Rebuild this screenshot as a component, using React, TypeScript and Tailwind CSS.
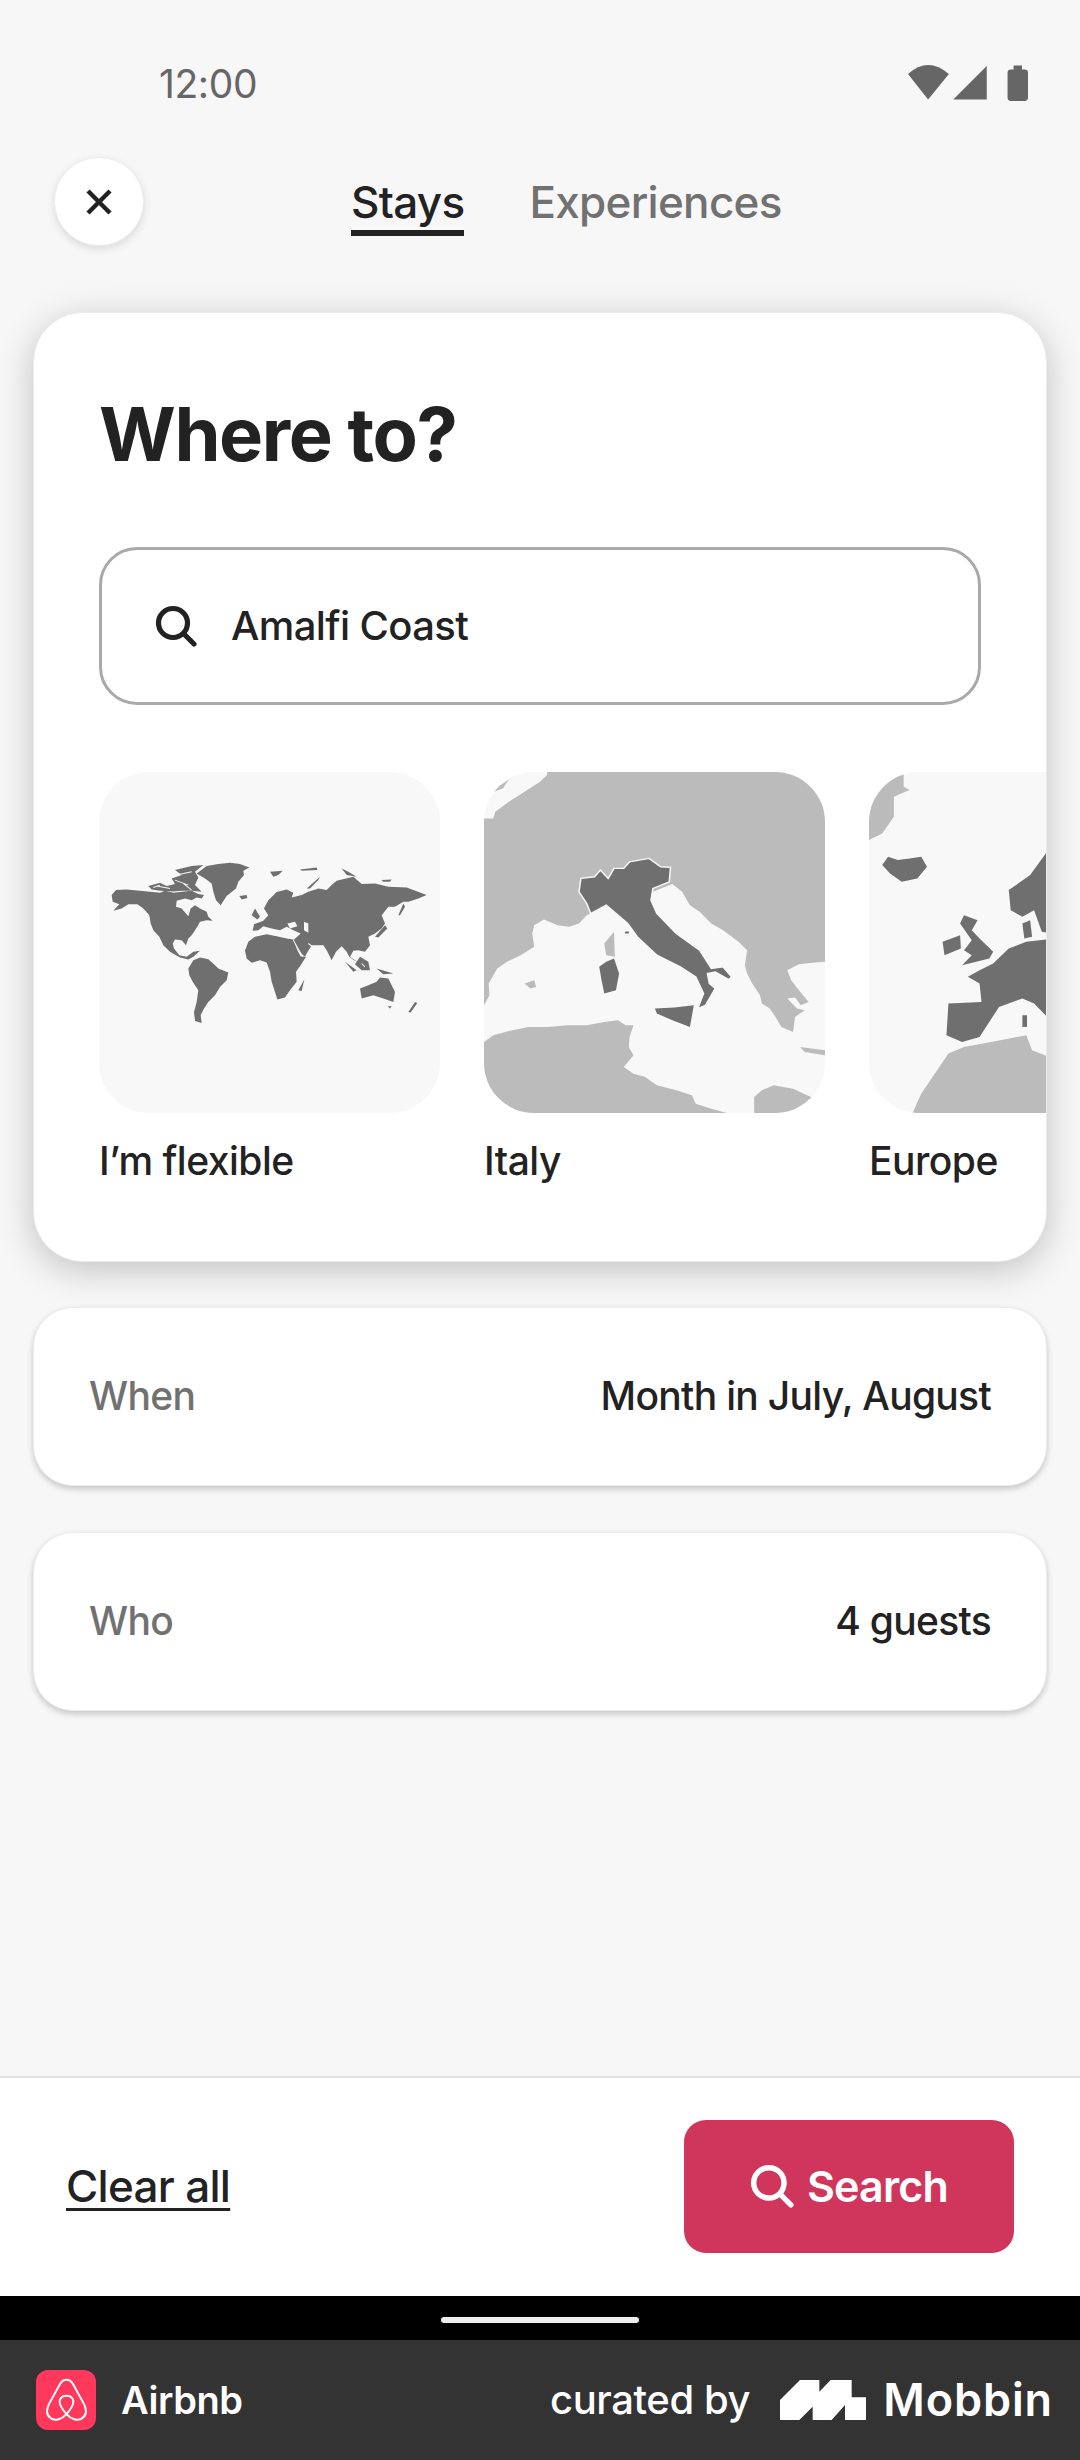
import React from "react";

const F = "font-['Inter','Liberation_Sans',sans-serif]";

function WorldMap() {
  return (
    <svg viewBox="117 36 1023 1022" preserveAspectRatio="none" className="block w-full h-full">
      <g fill="#6f6f6f">
        <polygon points="155,405 168,390 200,388 240,392 270,395 300,398 315,392 340,398 365,395 395,392 415,402 432,405 425,415 410,412 395,420 375,415 350,422 348,440 365,445 385,468 392,445 405,435 420,445 440,455 445,470 458,482 440,480 420,485 412,500 395,525 385,535 378,555 365,540 345,538 338,550 342,565 358,585 380,590 400,575 420,572 400,590 385,598 360,592 330,575 310,555 298,530 280,510 272,490 268,465 250,445 232,432 205,432 185,445 160,452 178,432 158,425" />
        <polygon points="265,378 300,368 320,378 345,372 335,355 365,345 345,330 395,318 430,315 405,335 415,352 405,375 425,395 395,392 365,392 340,394 300,392 275,388" />
        <polygon points="410,340 440,318 475,312 510,308 540,312 568,322 550,332 552,345 535,365 528,385 500,408 482,435 468,420 460,395 455,370 435,355" />
        <polygon points="538,408 560,405 562,414 545,418" />
        <polygon points="630,335 668,332 655,345 640,350" />
        <polygon points="385,625 400,600 420,592 445,597 462,612 475,625 505,637 500,660 480,680 465,705 445,725 432,745 422,765 425,788 405,782 402,755 410,725 415,690 398,665 388,645" />
        <polygon points="555,572 565,545 585,530 620,522 650,528 680,535 700,538 712,570 722,588 738,590 720,618 708,635 710,665 690,690 675,712 652,718 645,695 635,665 630,635 620,607 600,600 575,608 560,595" />
        <polygon points="715,690 733,658 725,692" />
        <polygon points="578,512 582,492 610,482 625,465 612,445 625,420 650,396 680,388 700,398 695,412 725,405 745,395 775,385 800,390 815,375 830,362 880,350 905,372 945,370 985,380 1040,382 1100,405 1075,415 1045,425 1030,425 1005,440 985,440 965,465 975,490 965,505 945,520 925,530 930,555 915,575 895,570 880,572 870,590 892,605 882,600 868,590 860,575 845,558 828,575 815,600 800,570 790,555 755,555 740,580 735,590 718,575 700,540 722,520 700,510 680,500 660,510 635,505 610,498 595,510" />
        <polygon points="575,465 585,445 600,470 592,478" />
        <polygon points="1015,465 1030,430 1035,440 1020,465" />
        <polygon points="945,530 975,495 982,505 955,532" />
        <polygon points="900,590 925,605 930,630 905,630 885,612" />
        <polygon points="950,625 1000,640 970,642" />
        <polygon points="855,605 890,630 880,635" />
        <polygon points="900,685 925,675 950,665 960,652 985,655 1005,695 1000,725 970,715 940,705 905,715" />
        <polygon points="983,738 995,738 990,745" />
        <polygon points="1045,755 1065,725 1072,728 1052,757" />
        <polygon points="845,325 865,335 890,350 860,345" />
        <polygon points="720,328 770,322 772,330 725,332" />
        <polygon points="740,385 780,350 775,360 750,385" />
        <polygon points="965,360 995,358 990,365 970,365" />
      </g>
      <g fill="#f8f8f8">
        <polygon points="732,485 745,490 745,518 732,510" />
        <polygon points="682,490 705,485 712,498 690,505" />
      </g>
      <path d="M290 378 L330 385 M345 360 L385 375 M350 345 L395 335 M370 370 L395 390 M280 382 L300 375 M700 540 L728 590 M745 550 L765 565 M905 610 L915 620" stroke="#f8f8f8" strokeWidth="3" fill="none" />
    </svg>
  );
}

function ItalyMap() {
  return (
    <svg viewBox="36 36 876 1022" preserveAspectRatio="none" className="block w-full h-full">
      <g fill="#bbbbbb">
        <polygon points="36,175 60,175 65,155 100,125 140,95 180,65 198,45 198,36 912,36 912,605 880,608 845,612 815,630 825,660 845,690 870,725 850,735 835,712 815,715 840,745 860,750 835,770 830,815 800,800 785,770 770,745 750,730 745,705 725,670 712,640 706,615 712,570 690,545 650,510 620,490 590,455 565,435 545,395 520,372 470,395 420,440 350,435 300,465 280,490 255,500 225,495 190,478 165,495 160,520 165,560 130,585 95,605 70,625 48,670 50,705 36,735" />
        <polygon points="60,90 100,58 85,85 62,95" />
        <polygon points="345,550 370,515 372,590 350,585" />
        <polygon points="140,670 165,660 170,680 155,685" />
        <polygon points="848,860 912,870 912,885 860,875" />
        <polygon points="36,845 60,825 100,812 150,800 200,800 250,795 300,795 345,785 380,780 400,795 420,795 410,830 408,860 420,885 395,920 420,940 450,950 480,975 530,990 570,1005 580,1030 620,1045 660,1058 36,1058" />
        <polygon points="730,1058 730,1010 750,990 780,975 830,985 880,1012 870,1025 840,1058" />
      </g>
      <g fill="#6f6f6f">
        <polygon stroke="#f8f8f8" strokeWidth="4" points="280,395 285,355 320,350 335,330 355,355 370,325 395,325 410,305 460,295 490,320 515,322 512,365 470,385 465,420 480,460 530,520 590,570 620,625 650,620 672,650 665,658 630,635 610,640 615,670 630,685 605,735 585,745 600,700 580,650 540,620 480,585 430,530 405,490 350,435 310,460 300,430" />
        <polygon points="332,620 350,605 370,595 383,640 375,690 345,700 338,660" />
        <polygon points="475,745 525,742 575,735 565,800 520,780 480,760" />
        <polygon points="398,515 408,513 408,520 398,520" />
      </g>
    </svg>
  );
}

function EuropeMap() {
  return (
    <svg viewBox="1026 36 876 1022" preserveAspectRatio="none" className="block w-full h-full">
      <g fill="#bbbbbb">
        <polygon points="1026,240 1026,110 1060,70 1115,40 1115,80 1130,90 1090,110 1090,170 1060,220" />
        <polygon points="1138,1058 1160,1000 1195,940 1230,880 1270,860 1340,845 1430,825 1445,870 1500,895 1500,1058" />
      </g>
      <g fill="#6f6f6f">
        <polygon points="1060,315 1075,290 1100,300 1130,295 1160,290 1175,320 1150,355 1110,365 1080,340" />
        <polygon points="1260,490 1270,465 1305,480 1290,510 1310,535 1345,575 1335,595 1265,615 1290,585 1270,570 1290,540" />
        <polygon points="1215,545 1260,525 1262,565 1220,585" />
        <polygon points="1500,240 1480,280 1440,345 1385,390 1390,450 1420,470 1450,450 1470,515 1500,520" />
        <polygon points="1420,490 1440,480 1445,530 1425,535" />
        <polygon points="1500,535 1430,545 1385,565 1345,610 1310,630 1280,650 1310,670 1315,725 1230,730 1225,825 1265,845 1310,830 1360,740 1420,715 1450,730 1500,790" />
        <polygon points="1420,765 1432,765 1432,800 1420,800" />
      </g>
    </svg>
  );
}

function SearchIcon({ className, color }: { className: string; color: string }) {
  return (
    <svg viewBox="0 0 42 42" className={className} fill="none" stroke={color} strokeWidth="5.2" strokeLinecap="round">
      <circle cx="18" cy="18" r="14.5" />
      <path d="M28.5 28.5 L39 39" />
    </svg>
  );
}

function Tile({ label, children }: { label: string; children: React.ReactNode }) {
  return (
    <div className="w-[341px] shrink-0">
      <div className="h-[341px] w-full overflow-hidden rounded-[50px] bg-[#f8f8f8]">{children}</div>
      <div className="mt-[26px] text-[39px] leading-[44px] tracking-[-0.5px] font-medium text-[#222222] whitespace-nowrap">{label}</div>
    </div>
  );
}

function Row({ a, b }: { a: string; b: string }) {
  return (
    <div className="mx-[33px] flex h-[179px] items-center justify-between rounded-[40px] border border-[#ececec] bg-white pl-[55px] pr-[55px] text-[39px] tracking-[-0.7px] font-medium shadow-[0_3px_6px_rgba(0,0,0,0.2)]">
      <span className="text-[#717171]">{a}</span>
      <span className="text-[#222222]">{b}</span>
    </div>
  );
}

export default function App() {
  return (
    <div className={"flex h-[2460px] w-[1080px] flex-col overflow-hidden bg-[#f7f7f7] " + F}>
      <div className="flex h-[157px] shrink-0 items-start justify-between pl-[159px] pr-[52px] pt-[62px]">
        <span className="text-[39px] leading-[44px] text-[#666666] tracking-[-0.4px]">12:00</span>
        <svg viewBox="55 45 358 107" className="mt-[3px] h-[36px] w-[120px]" fill="#666666">
          <path d="M55 72 Q115 18 177 72 L115 148 Z" />
          <path d="M190 148 L290 48 V148 Z" />
          <path d="M370 58 V46 H395 V58 H403 Q413 58 413 68 V142 Q413 152 403 152 H362 Q352 152 352 142 V68 Q352 58 362 58 Z" />
        </svg>
      </div>

      <div className="flex h-[89px] shrink-0 items-start pl-[54px]">
        <div className="flex h-[89px] w-[90px] items-center justify-center rounded-full border border-[#eeeeee] bg-white shadow-[0_3px_8px_rgba(0,0,0,0.12)]">
          <svg viewBox="0 0 26 26" className="h-[26px] w-[26px]" stroke="#222222" strokeWidth="4.4" fill="none">
            <path d="M2 2 L24 24 M24 2 L2 24" />
          </svg>
        </div>
        <div className="ml-[207px] flex gap-[65px] pt-[20px] text-[44px] leading-[50px] tracking-[-0.7px] font-medium">
          <div className="relative text-[#222222]">
            Stays
            <div className="absolute left-0 right-0 top-[53px] h-[6px] bg-[#222222]" />
          </div>
          <div className="text-[#717171]">Experiences</div>
        </div>
      </div>

      <div className="mx-[33px] mt-[66px] h-[950px] shrink-0 overflow-hidden rounded-[50px] border border-[#ececec] bg-white pl-[65px] pt-[77px] shadow-[0_8px_36px_rgba(0,0,0,0.22)]">
        <div className="text-[74px] leading-[88px] tracking-[-1.4px] font-bold text-[#222222]">Where to?</div>
        <div className="mt-[69px] flex h-[158px] w-[882px] items-center rounded-[38px] border-[3px] border-[#a9a9a9] pl-[53px]">
          <SearchIcon className="h-[42px] w-[42px]" color="#222222" />
          <span className="ml-[34px] text-[40px] tracking-[-0.6px] font-medium text-[#222222]">Amalfi Coast</span>
        </div>
        <div className="mt-[67px] flex gap-[44px]">
          <Tile label="I’m flexible"><WorldMap /></Tile>
          <Tile label="Italy"><ItalyMap /></Tile>
          <Tile label="Europe"><EuropeMap /></Tile>
        </div>
      </div>

      <div className="mt-[45px] shrink-0"><Row a="When" b="Month in July, August" /></div>
      <div className="mt-[46px] shrink-0"><Row a="Who" b="4 guests" /></div>
      <div className="flex-1" />

      <div className="flex h-[220px] shrink-0 items-center justify-between border-t-2 border-[#e2e2e2] bg-white pb-[2px] pl-[66px] pr-[66px]">
        <span className="text-[44px] tracking-[-0.7px] font-medium text-[#222222] underline decoration-[3px] underline-offset-[6px]">Clear all</span>
        <div className="flex h-[133px] w-[330px] items-center justify-center gap-[13px] rounded-[22px] bg-[#d0365b]">
          <SearchIcon className="h-[44px] w-[44px]" color="#ffffff" />
          <span className="text-[43px] tracking-[-0.8px] font-semibold text-white">Search</span>
        </div>
      </div>

      <div className="flex h-[44px] shrink-0 items-start justify-center bg-black pt-[21px]">
        <div className="h-[6px] w-[198px] rounded-full bg-[#eeeeee]" />
      </div>

      <div className="flex h-[120px] shrink-0 items-center justify-between bg-[#333333] pl-[36px] pr-[27px]">
        <div className="flex items-center gap-[25px]">
          <div className="flex h-[60px] w-[60px] items-center justify-center rounded-[12px] bg-[#ff385c]">
            <svg viewBox="70 78 136 142" className="h-[47px] w-[45px]" fill="none" stroke="#ffffff" strokeWidth="6" strokeLinejoin="round">
              <path d="M138 190 C125 205 100 215 88 200 C75 190 78 175 85 160 L118 100 C128 82 148 82 158 100 L191 160 C198 175 201 190 188 200 C176 215 151 205 138 190 C120 170 112 155 120 143 C128 132 148 132 156 143 C164 155 156 170 138 190 Z" />
            </svg>
          </div>
          <span className="text-[38px] tracking-[-0.4px] font-semibold text-white">Airbnb</span>
        </div>
        <div className="flex items-center">
          <span className="text-[40px] tracking-[-0.4px] font-medium text-white">curated by</span>
          <svg viewBox="60 60 258 120" className="ml-[30px] h-[40px] w-[86px]" fill="#ffffff">
            <polygon points="60,180 60,120 120,60 178,60 178,95 212,60 275,60 275,112 318,112 318,180 255,180 255,135 215,180 158,180 158,140 118,180" />
          </svg>
          <span className="ml-[17px] text-[45px] tracking-[0.9px] font-semibold text-white">Mobbin</span>
        </div>
      </div>
    </div>
  );
}
